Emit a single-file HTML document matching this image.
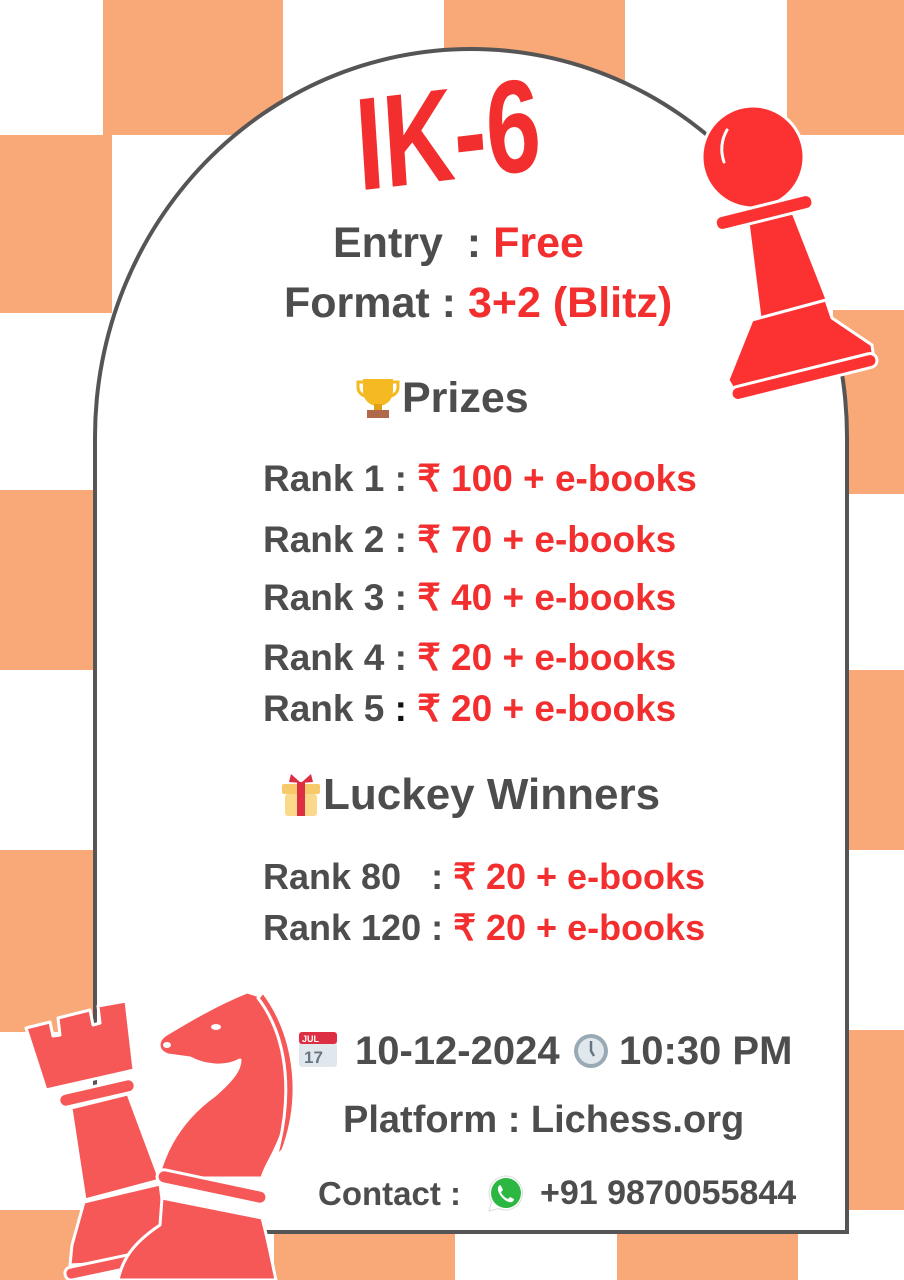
<!DOCTYPE html>
<html><head><meta charset="utf-8">
<style>
html,body{margin:0;padding:0}
body{width:904px;height:1280px;position:relative;overflow:hidden;background:#fff;font-family:"Liberation Sans",sans-serif;font-weight:bold}
.o{position:absolute;background:#f9a977}
.arch{position:absolute;left:93px;top:47px;width:748px;height:1179px;border:4px solid #555;border-radius:378px 378px 0 0/390px 390px 0 0;background:#fff}
.t{position:absolute;white-space:nowrap;line-height:1;color:#4d4d4d}
.r{color:#f22e2e}
</style></head><body>
<div class="o" style="left:103px;top:0;width:180px;height:135px"></div>
<div class="o" style="left:444px;top:0;width:181px;height:135px"></div>
<div class="o" style="left:787px;top:0;width:117px;height:135px"></div>
<div class="o" style="left:0;top:135px;width:112px;height:178px"></div>
<div class="o" style="left:833px;top:310px;width:71px;height:184px"></div>
<div class="o" style="left:0;top:490px;width:95px;height:180px"></div>
<div class="o" style="left:845px;top:670px;width:59px;height:180px"></div>
<div class="o" style="left:0;top:850px;width:95px;height:182px"></div>
<div class="o" style="left:845px;top:1030px;width:59px;height:180px"></div>
<div class="o" style="left:0;top:1210px;width:80px;height:70px"></div>
<div class="o" style="left:274px;top:1210px;width:181px;height:70px"></div>
<div class="o" style="left:617px;top:1210px;width:181px;height:70px"></div>

<div class="arch"></div>

<div class="t r" style="left:352px;top:80px;font-size:132px;transform:scaleX(0.74) rotate(-5deg);transform-origin:left top">IK-6</div>

<div class="t" style="left:333px;top:222px;font-size:43px">Entry&nbsp; : <span class="r">Free</span></div>
<div class="t" style="left:284px;top:282px;font-size:43px">Format : <span class="r">3+2 (Blitz)</span></div>

<svg style="position:absolute;left:355px;top:376px" width="46" height="44" viewBox="0 0 46 44">
<path d="M8 3h30v12c0 9-7 15-15 15S8 24 8 15z" fill="#f5b921"/>
<path d="M8 6H3v5c0 6 5 9 8 9M38 6h5v5c0 6-5 9-8 9" fill="none" stroke="#f5b921" stroke-width="3"/>
<rect x="19" y="28" width="8" height="6" fill="#e0a019"/>
<rect x="12" y="34" width="22" height="8" fill="#b06a4a"/>
</svg>
<div class="t" style="left:402px;top:377px;font-size:43px">Prizes</div>

<div class="t" style="left:263px;top:460px;font-size:37px">Rank 1 : <span class="r">₹ 100 + e-books</span></div>
<div class="t" style="left:263px;top:521px;font-size:37px">Rank 2 : <span class="r">₹ 70 + e-books</span></div>
<div class="t" style="left:263px;top:579px;font-size:37px">Rank 3 : <span class="r">₹ 40 + e-books</span></div>
<div class="t" style="left:263px;top:639px;font-size:37px">Rank 4 : <span class="r">₹ 20 + e-books</span></div>
<div class="t" style="left:263px;top:690px;font-size:37px">Rank 5 <span style="color:#111">:</span> <span class="r">₹ 20 + e-books</span></div>

<svg style="position:absolute;left:279px;top:772px" width="44" height="46" viewBox="0 0 44 46">
<rect x="3" y="12" width="38" height="10" rx="2" fill="#f7c96a"/>
<rect x="6" y="22" width="32" height="22" rx="3" fill="#fbd98a"/>
<rect x="18" y="10" width="8" height="34" fill="#dd2e44"/>
<path d="M22 11L12 2l-2 8zM22 11l10-9 2 8z" fill="#dd2e44"/>
</svg>
<div class="t" style="left:323px;top:773px;font-size:44px">Luckey Winners</div>

<div class="t" style="left:263px;top:859px;font-size:36px">Rank 80 &nbsp; : <span class="r">₹ 20 + e-books</span></div>
<div class="t" style="left:263px;top:910px;font-size:36px">Rank 120 : <span class="r">₹ 20 + e-books</span></div>

<svg style="position:absolute;left:298px;top:1030px" width="40" height="38" viewBox="0 0 40 38">
<rect x="1" y="2" width="38" height="35" rx="3" fill="#e1e8ed"/>
<rect x="1" y="2" width="38" height="12" rx="3" fill="#dd2e44"/>
<text x="4" y="12" font-size="9" fill="#fff" font-family="Liberation Sans">JUL</text>
<text x="6" y="33" font-size="17" fill="#66757f" font-family="Liberation Sans">17</text>
</svg>
<div class="t" style="left:355px;top:1031px;font-size:40px">10-12-2024</div>
<svg style="position:absolute;left:572px;top:1032px" width="38" height="38" viewBox="0 0 38 38">
<circle cx="19" cy="19" r="17" fill="#99aab5"/><circle cx="19" cy="19" r="13" fill="#e1e8ed"/>
<path d="M19 9v10l3 5" stroke="#66757f" stroke-width="2.5" fill="none"/>
</svg>
<div class="t" style="left:619px;top:1031px;font-size:40px">10:30 PM</div>

<div class="t" style="left:343px;top:1101px;font-size:38px">Platform : Lichess.org</div>

<div class="t" style="left:318px;top:1177px;font-size:33px">Contact :</div>
<svg style="position:absolute;left:486px;top:1174px" width="40" height="40" viewBox="0 0 40 40">
<path d="M20 2a17 17 0 0 0-14.6 25.7L3 37l9.6-2.5A17 17 0 1 0 20 2z" fill="#fff" stroke="#ddd"/>
<circle cx="20" cy="19" r="15" fill="#2cb742"/>
<path d="M14 11c-2 1-3 4-1 8s6 8 10 9c3 1 5-1 5-3l-4-2-2 2c-3-1-6-4-7-7l2-2-2-4z" fill="#fff"/>
</svg>
<div class="t" style="left:540px;top:1176px;font-size:34px">+91 9870055844</div>

<svg style="position:absolute;left:0;top:0" width="904" height="1280" viewBox="0 0 904 1280">
<g fill="#fc3232" stroke="#fff" stroke-width="3" stroke-linejoin="round">
<polygon points="748,222 792,210 828,302 760,318"/>
<polygon points="752,320 826,300 832,318 872,345 874,360 735,392 728,380"/>
<circle cx="753" cy="157" r="51"/>
<rect x="714" y="205" width="100" height="15" rx="7" transform="rotate(-14 764 212)"/>
<rect x="729" y="370" width="150" height="14" rx="7" transform="rotate(-14 804 377)"/>
</g>
<path d="M727 130a38 38 0 0 0-3 32" stroke="#fff" stroke-width="3" fill="none" stroke-linecap="round"/>
<g fill="#f65858" stroke="#fff" stroke-width="3" stroke-linejoin="round">
<polygon points="26,1028 50,1022 53,1036 60,1035 58,1018 90,1010 93,1025 100,1023 98,1006 126,1001 134,1070 46,1090"/>
<rect x="58" y="1086" width="78" height="14" rx="7" transform="rotate(-13 97 1093)"/>
<polygon points="71,1108 128,1094 160,1180 85,1200"/>
<polygon points="84,1202 160,1184 170,1260 70,1265 72,1245"/>
<rect x="64" y="1258" width="100" height="13" rx="6" transform="rotate(-12 114 1264)"/>
<path d="M260,996 C285,1030 300,1080 283,1130 C275,1155 265,1165 262,1178 L158,1178 C165,1150 180,1120 215,1095 C232,1080 240,1070 240,1060 C225,1068 205,1066 190,1058 L168,1055 C155,1050 158,1040 165,1035 C190,1020 215,1005 247,992 Z"/>
<path d="M263,992 C292,1030 305,1090 283,1150 L276,1157 C292,1100 290,1040 258,998Z"/>
<rect x="156" y="1180" width="112" height="14" rx="7" transform="rotate(12 212 1187)"/>
<path d="M162,1198 L262,1218 C268,1240 272,1262 276,1280 L118,1280 C122,1262 130,1245 160,1225 Z"/>
</g>
<ellipse cx="216" cy="1027" rx="5" ry="3" fill="#fff"/>
<ellipse cx="167" cy="1045" rx="4" ry="3" fill="#fff"/>
</svg>
</body></html>
